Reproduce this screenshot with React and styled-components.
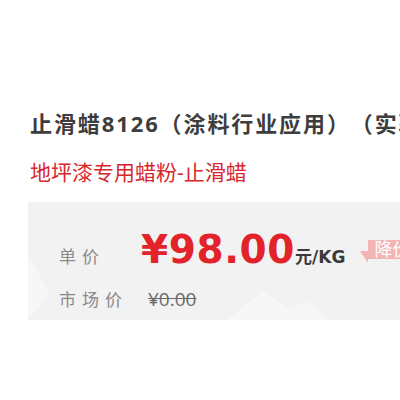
import React from 'react';
import styled, { createGlobalStyle } from 'styled-components';

const GlobalStyle = createGlobalStyle`
  body {
    margin: 0;
    background: #ffffff;
    font-family: 'Open Sans', 'Noto Sans CJK SC', sans-serif;
  }
`;

const PanelPattern = () => (
  <PatternSvg viewBox="0 0 372 118" preserveAspectRatio="none">
    <polygon points="0,52 22,92 0,118" fill="#f7f7f7" />
    <polygon points="198,118 235,89 260,107 279,99 302,118" fill="#f7f7f7" />
  </PatternSvg>
);

const App = () => {
  return (
    <Page>
      <GlobalStyle />
      <Title>止滑蜡8126（涂料行业应用）（实验室检测报告）</Title>
      <Subtitle>地坪漆专用蜡粉-止滑蜡</Subtitle>
      <PricePanel>
        <PanelPattern />
        <PriceRow>
          <Label width="82px">单价</Label>
          <Price>¥98.00</Price>
          <Unit>元/KG</Unit>
          <Tag>降价通知</Tag>
        </PriceRow>
        <MarketRow>
          <Label width="89px">市场价</Label>
          <OldPrice>¥0.00</OldPrice>
        </MarketRow>
      </PricePanel>
    </Page>
  );
};

const Page = styled.div`
  width: 400px;
  height: 400px;
  overflow: hidden;
  padding: 108px 0 0 30px;
  box-sizing: border-box;
`;

const Title = styled.h1`
  margin: 0;
  font-size: 22px;
  line-height: 30px;
  font-weight: 700;
  letter-spacing: 1.9px;
  color: #3d3d3d;
  white-space: nowrap;
  text-spacing-trim: space-all;
  font-feature-settings: 'halt' 0, 'chws' 0;
`;

const Subtitle = styled.div`
  margin-top: 21px;
  font-size: 21px;
  line-height: 26px;
  color: #d8262d;
  white-space: nowrap;
`;

const PricePanel = styled.div`
  position: relative;
  margin: 17px 0 0 -2px;
  height: 118px;
  background: #f2f2f2;
  padding: 26px 0 0 31px;
  box-sizing: border-box;
`;

const PatternSvg = styled.svg`
  position: absolute;
  left: 0;
  top: 0;
  width: 100%;
  height: 100%;
`;

const PriceRow = styled.div`
  position: relative;
  display: flex;
  align-items: baseline;
  white-space: nowrap;
  height: 44px;
`;

const MarketRow = styled.div`
  position: relative;
  display: flex;
  align-items: baseline;
  white-space: nowrap;
  margin-top: 14px;
`;

const Label = styled.span`
  width: ${(p) => p.width};
  flex-shrink: 0;
  font-size: 17px;
  line-height: 24px;
  letter-spacing: 6px;
  color: #8a8a8a;
`;

const Price = styled.span`
  font-family: 'DejaVu Sans', sans-serif;
  font-size: 39px;
  line-height: 44px;
  font-weight: 700;
  letter-spacing: 0.6px;
  color: #e2232a;
`;

const Unit = styled.span`
  font-family: 'DejaVu Sans', 'Noto Sans CJK SC', sans-serif;
  font-size: 17px;
  font-weight: 700;
  color: #3a3a3a;
`;

const Tag = styled.span`
  position: relative;
  margin-left: 23px;
  align-self: flex-start;
  margin-top: 12px;
  padding: 0 6px;
  height: 19px;
  line-height: 19px;
  font-size: 18px;
  color: #ffffff;
  background: #f3b4b4;
  &:before {
    content: '';
    position: absolute;
    left: -8px;
    bottom: -4px;
    border-style: solid;
    border-width: 0 8px 12px 0;
    border-color: transparent #f3b4b4 transparent transparent;
  }
`;

const OldPrice = styled.span`
  font-size: 19px;
  color: #6a6a6a;
  text-decoration: line-through;
`;

export default App;
